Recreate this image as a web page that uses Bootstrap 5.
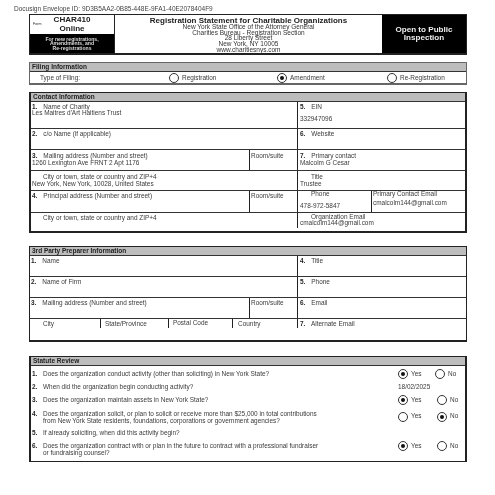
<!DOCTYPE html>
<html lang="en">
<head>
<meta charset="utf-8">
<title>CHAR410</title>
<link href="https://cdn.jsdelivr.net/npm/bootstrap@5.3.0/dist/css/bootstrap.min.css" rel="stylesheet">
<style>
html,body{background:#fff;overflow:hidden}
body{font-family:"Liberation Sans",Arial,sans-serif;font-size:6.45px;line-height:6.4px;color:#3a3a3a;height:495px;filter:blur(.35px)}
.envelope{height:14px;padding:5px 0 0 14px;font-size:6.5px;line-height:7px;color:#444;white-space:nowrap}
.sheet{width:438px;margin-left:29px}
.hdr{height:41px;border:1px solid #222;border-bottom-width:2px}
.formcol{width:85px;flex:none;border-right:1px solid #222}
.formtop{height:19px;padding-left:3px;color:#222}
.formtop small{font-size:3.6px;width:14px;flex:none}
.formname{width:50px;text-align:center;font-weight:700;font-size:8.1px;line-height:8.5px;color:#222}
.formblack{background:#000;color:#ddd;font-size:5.1px;line-height:4.8px;font-weight:700;text-align:center;padding-top:2.5px;flex:1}
.title{flex:1;text-align:center;font-size:6.5px;line-height:5.7px;padding-top:1.5px;color:#333;white-space:nowrap}
.title b{display:block;font-size:8px;line-height:7.5px;color:#222}
.open{width:84px;flex:none;background:#000;color:#eee;font-weight:700;font-size:8.1px;line-height:8px;text-align:center;padding-top:11px}
.sect-filing{margin-top:7px;height:23px;border:1px solid #666;border-bottom-width:2px}
.sect-contact{margin-top:7px;height:141px;border:2px solid #222;border-top-width:1px}
.sect-third{margin-top:13px;height:96px;border:1px solid #222;border-bottom-width:2px}
.sect-stat{margin-top:14px;height:106px;border:2px solid #222;border-width:1px 2px}
.band{height:9px;background:#bdbdbd;border-bottom:1px solid #333;font-weight:700;font-size:6.5px;line-height:8px;padding-left:2px;color:#222;white-space:nowrap}
.filing{height:11px;padding-left:10px;line-height:11px}
.filing-type{width:129px}
.radio-a{width:108px}
.radio-b{width:110px}
.dot{width:10px;height:10px;border:1px solid #333;border-radius:50%;flex:none;background:#fff;position:relative;margin-right:3px}
.dot.on::after{content:"";position:absolute;left:2px;top:2px;width:4px;height:4px;border-radius:50%;background:#111}
.line{border-bottom:1px solid #333;display:flex}
.line:last-child{border-bottom:0}
.h27{height:27px}.h21{height:21px}.h22{height:22px}.h20{height:20px}
.fill{flex:1}
.airy{line-height:7px}
.main-cell{width:266px;padding:1.5px 1px;flex:none}
.main-3p{width:267px}
.side{flex:1;border-left:1.5px solid #222;padding:1.5px 2px;min-width:0;white-space:nowrap}
.side-tight{padding-top:.5px}
.addr{width:218px;padding:1.5px 1px;flex:none}
.addr-3p{width:219px}
.room{width:48px;flex:none;border-left:1px solid #222;padding:1.5px 1px}
.ind{padding-left:11px}
.lab b{display:inline-block;width:9.5px;color:#222}
.phone{width:74px;flex:none;padding:0 2px;border-right:1px solid #222}
.pce{flex:1;padding:0 1px}
.phone-val{margin-top:5.6px}
.pce-val{margin-top:3px}
.ein-val{margin-top:5.6px}
.c1{width:71px;flex:none;padding:1.5px 2px 1px 13px;border-right:1px solid #222}
.c2{width:68px;flex:none;padding:1.5px 4px;border-right:1px solid #222}
.c3{width:64px;flex:none;padding:.5px 4px;border-right:1px solid #222}
.c4{width:64px;flex:none;padding:1.5px 5px}
.q{padding-left:1px;white-space:nowrap}
.qt{width:366px;flex:none;display:flex;line-height:6.6px}
.qt b{width:11px;flex:none;color:#222}
.qt-low{padding-top:2px}
.yn{display:flex;align-items:center}
.yn-top{margin-bottom:8px}
.yes{width:37px;display:flex;align-items:center}
.no{display:flex;align-items:center}
.no-in{margin-left:2px}
.q1{height:14px;margin-top:1px}
.q2{height:12px}
.q3{height:14px}
.q4{height:19px}
.q5{height:12px;margin-top:1px}
.q6{height:20px;margin-top:1px}
</style>
</head>
<body>
<div class="envelope">Docusign Envelope ID: 9D3B5AA2-0B85-448E-9FA1-40E2078404F9</div>
<div class="sheet">
  <div class="hdr d-flex">
    <div class="formcol d-flex flex-column">
      <div class="formtop d-flex align-items-center"><small>Form</small><div class="formname">CHAR410<br>Online</div></div>
      <div class="formblack">For new registrations,<br>Amendments, and<br>Re-registrations</div>
    </div>
    <div class="title"><b>Registration Statement for Charitable Organizations</b>New York State Office of the Attorney General<br>Charities Bureau - Registration Section<br>28 Liberty Street<br>New York, NY 10005<br>www.charitiesnys.com</div>
    <div class="open">Open to Public<br>Inspection</div>
  </div>

  <div class="sect-filing">
    <div class="band">Filing Information</div>
    <div class="filing d-flex align-items-center">
      <div class="filing-type">Type of Filing:</div>
      <div class="radio-a d-flex align-items-center"><span class="dot"></span>Registration</div>
      <div class="radio-b d-flex align-items-center"><span class="dot on"></span>Amendment</div>
      <div class="d-flex align-items-center"><span class="dot"></span>Re-Registration</div>
    </div>
  </div>

  <div class="sect-contact">
    <div class="band">Contact Information</div>
    <div class="line h27"><div class="main-cell lab"><b>1.</b> Name of Charity<br>Les Maitres d'Art Haitiens Trust</div><div class="side lab"><b>5.</b> EIN<div class="ein-val">332947096</div></div></div>
    <div class="line h21"><div class="main-cell lab"><b>2.</b> c/o Name (if applicable)</div><div class="side lab"><b>6.</b> Website</div></div>
    <div class="line h21 airy"><div class="addr lab"><b>3.</b> Mailing address (Number and street)<br>1260 Lexington Ave FRNT 2 Apt 1176</div><div class="room">Room/suite</div><div class="side lab"><b>7.</b> Primary contact<br>Malcolm G Cesar</div></div>
    <div class="line h20 airy"><div class="main-cell"><div class="ind">City or town, state or country and ZIP+4</div>New York, New York, 10028, United States</div><div class="side"><div class="ind">Title</div>Trustee</div></div>
    <div class="line h22"><div class="addr lab"><b>4.</b> Principal address (Number and street)</div><div class="room">Room/suite</div><div class="side d-flex p-0"><div class="phone"><div class="ind">Phone</div><div class="phone-val">478-972-5847</div></div><div class="pce">Primary Contact Email<div class="pce-val">cmalcolm144@gmail.com</div></div></div></div>
    <div class="line fill"><div class="main-cell"><div class="ind">City or town, state or country and ZIP+4</div></div><div class="side side-tight"><div class="ind">Organization Email</div>cmalcolm144@gmail.com</div></div>
  </div>

  <div class="sect-third">
    <div class="band">3rd Party Preparer Information</div>
    <div class="line h21"><div class="main-cell main-3p lab"><b>1.</b> Name</div><div class="side lab"><b>4.</b> Title</div></div>
    <div class="line h21"><div class="main-cell main-3p lab"><b>2.</b> Name of Firm</div><div class="side lab"><b>5.</b> Phone</div></div>
    <div class="line h21"><div class="addr addr-3p lab"><b>3.</b> Mailing address (Number and street)</div><div class="room">Room/suite</div><div class="side lab"><b>6.</b> Email</div></div>
    <div class="line"><div class="c1">City</div><div class="c2">State/Province</div><div class="c3">Postal Code</div><div class="c4">Country</div><div class="side lab"><b>7.</b> Alternate Email</div></div>
  </div>

  <div class="sect-stat">
    <div class="band">Statute Review</div>
    <div class="q d-flex align-items-center q1"><div class="qt"><b>1.</b>Does the organization conduct activity (other than soliciting) in New York State?</div><div class="yn"><span class="yes"><span class="dot on"></span>Yes</span><span class="no"><span class="dot"></span>No</span></div></div>
    <div class="q d-flex align-items-center q2"><div class="qt"><b>2.</b>When did the organization begin conducting activity?</div><div>18/02/2025</div></div>
    <div class="q d-flex align-items-center q3"><div class="qt"><b>3.</b>Does the organization maintain assets in New York State?</div><div class="yn"><span class="yes"><span class="dot on"></span>Yes</span><span class="no no-in"><span class="dot"></span>No</span></div></div>
    <div class="q d-flex align-items-center q4"><div class="qt qt-low"><b>4.</b><span>Does the organization solicit, or plan to solicit or receive more than $25,000 in total contributions<br>from New York State residents, foundations, corporations or government agencies?</span></div><div class="yn"><span class="yes"><span class="dot"></span>Yes</span><span class="no no-in"><span class="dot on"></span>No</span></div></div>
    <div class="q d-flex align-items-center q5"><div class="qt"><b>5.</b>If already soliciting, when did this activity begin?</div></div>
    <div class="q d-flex align-items-center q6"><div class="qt"><b>6.</b><span>Does the organization contract with or plan in the future to contract with a professional fundraiser<br>or fundraising counsel?</span></div><div class="yn yn-top"><span class="yes"><span class="dot on"></span>Yes</span><span class="no no-in"><span class="dot"></span>No</span></div></div>
  </div>
</div>
<script src="https://cdn.jsdelivr.net/npm/bootstrap@5.3.0/dist/js/bootstrap.bundle.min.js"></script>
</body>
</html>
